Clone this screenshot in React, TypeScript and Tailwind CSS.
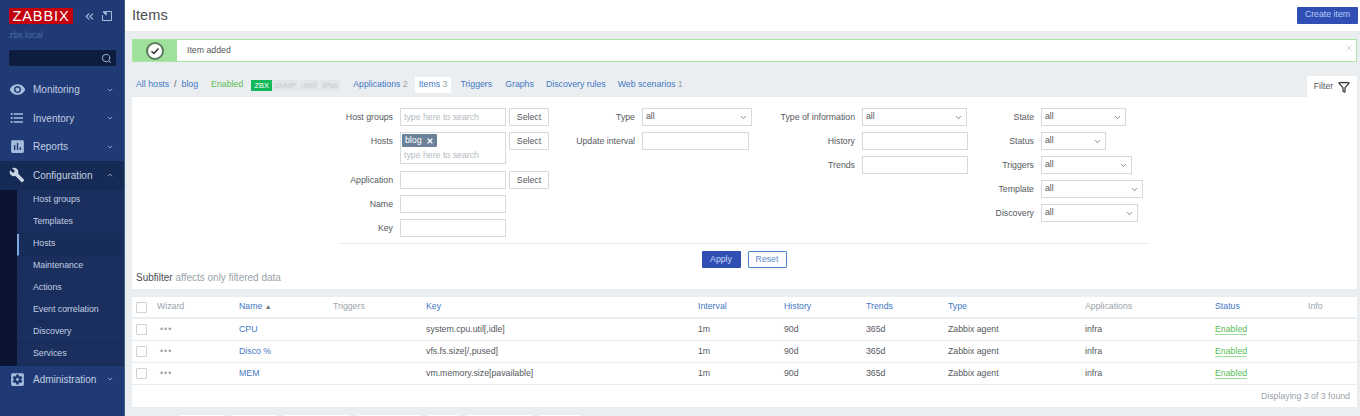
import type { ReactNode } from "react";
import { ChevronDown, ChevronUp, ChevronsLeft, Funnel, Search, X } from "lucide-react";
import {
  MdAssessment,
  MdBuild,
  MdFormatListBulleted,
  MdRemoveRedEye,
  MdSettingsApplications,
} from "react-icons/md";

const subMenu = [
  "Host groups",
  "Templates",
  "Hosts",
  "Maintenance",
  "Actions",
  "Event correlation",
  "Discovery",
  "Services",
];

const rows = [
  { name: "CPU", key: "system.cpu.util[,idle]" },
  { name: "Disco %", key: "vfs.fs.size[/,pused]" },
  { name: "MEM", key: "vm.memory.size[pavailable]" },
];

const footerTabs = ["w-[44px]", "w-[45px]", "w-[65px]", "w-[63px]", "w-[29px]", "w-[65px]", "w-[42px]"];

const gridCols =
  "grid grid-cols-[21px_82px_94px_93px_272px_86px_82px_82px_137px_130px_93px_1fr] pl-[4px] items-center";

function MenuItem({ icon, label, open, active }: { icon: ReactNode; label: string; open?: boolean; active?: boolean }) {
  return (
    <div className={`flex h-[28.5px] items-center pl-[9px] pr-[10px] text-[#c3cfe0] ${active ? "bg-[#152a54]" : ""}`}>
      <span className="flex w-[24px] items-center text-[#a6bcdc]">{icon}</span>
      <span className="flex-1 text-[10px]">{label}</span>
      {open ? <ChevronUp size={8} strokeWidth={2} /> : <ChevronDown size={8} strokeWidth={2} />}
    </div>
  );
}

function Field({ label, labelW, children, tall }: { label: string; labelW: string; children: ReactNode; tall?: boolean }) {
  return (
    <div className={`flex gap-[7px] ${tall ? "h-[39px]" : "h-[24px]"}`}>
      <span className={`${labelW} shrink-0 pt-[3px] text-right leading-[12px] text-[#55595e]`}>{label}</span>
      <div className="flex gap-[3px]">{children}</div>
    </div>
  );
}

function TextBox({ w = "w-[107px]", placeholder }: { w?: string; placeholder?: string }) {
  return (
    <div className={`${w} h-[18px] border border-[#d3dae0] bg-white px-[3px] leading-[16px] text-[#b4bac0]`}>
      {placeholder}
    </div>
  );
}

function SelectBtn() {
  return (
    <div className="h-[18px] w-[40px] rounded-[1px] border border-[#d3dae0] bg-white text-center leading-[16px] text-[#55595e]">
      Select
    </div>
  );
}

function Dropdown({ w }: { w: string }) {
  return (
    <div className={`${w} flex h-[18px] items-center justify-between border border-[#d3dae0] bg-white pl-[3px] pr-[3px] text-[#55595e]`}>
      all
      <ChevronDown size={9} strokeWidth={2} className="text-[#5e6469]" />
    </div>
  );
}

function Head({ children, link }: { children?: ReactNode; link?: boolean }) {
  return <span className={link ? "text-[#3f77c4]" : "text-[#9aa3aa]"}>{children}</span>;
}

export default function App() {
  return (
    <div className="flex h-[416px] w-[1360px] overflow-hidden bg-[#ebeef0] font-['Liberation_Sans',sans-serif] text-[8.75px]">
      <aside className="w-[125px] shrink-0 border-r border-[#3d5f7c] bg-[#1f3a75]">
        <div className="flex items-center pl-[9px] pt-[8px]">
          <div className="flex h-[16px] w-[64px] items-center justify-center rounded-[1px] bg-[#c4000c] text-[14.5px] leading-none tracking-[0.9px] text-white">
            ZABBIX
          </div>
          <ChevronsLeft size={13} className="ml-[10px] text-[#a6bcdc]" />
          <svg viewBox="0 0 10 10" className="ml-[6px] h-[10px] w-[10px] text-[#a6bcdc]" fill="none" stroke="currentColor">
            <path d="M4 .5h5.5v9H.5V4" />
            <path d="M.8.8l3.4 3.4M.8.8h3.4v3.4" fill="currentColor" strokeWidth=".8" />
          </svg>
        </div>
        <div className="pl-[9px] pt-[6px] text-[8.75px] leading-[11px] text-[#4f6c9e]">zbx.local</div>
        <div className="ml-[9px] mt-[9px] flex h-[16px] w-[107px] items-center justify-end rounded-[1px] border border-[#11203f] bg-[#0e1d3f] pr-[3px] text-[#a6bcdc]">
          <Search size={11} />
        </div>
        <div className="mt-[9.5px]">
          <MenuItem icon={<MdRemoveRedEye size={17} />} label="Monitoring" />
          <MenuItem icon={<MdFormatListBulleted size={16} />} label="Inventory" />
          <MenuItem icon={<MdAssessment size={17} />} label="Reports" />
          <MenuItem icon={<MdBuild size={16} className="text-[#c9d5e6]" />} label="Configuration" open active />
        </div>
        <div className="flex bg-[#0a1430]">
          <div className="w-[17px]" />
          <div className="flex-1">
            {subMenu.map((s) => (
              <div
                key={s}
                className={`flex h-[22px] items-center border-b border-[#152a54] pl-[16px] text-[#c3cfe0] ${
                  s === "Hosts" ? "border-l-2 border-l-[#7ea8e0] bg-[#172c58] !pl-[14px]" : "bg-[#1b2f5f]"
                }`}
              >
                {s}
              </div>
            ))}
          </div>
        </div>
        <div className="-mt-[0.5px]">
          <MenuItem icon={<MdSettingsApplications size={17} />} label="Administration" />
        </div>
      </aside>

      <main className="min-w-0 flex-1">
        <header className="flex h-[31px] items-center justify-between bg-white pl-[7px] pr-[2px]">
          <h1 className="text-[14.6px] text-[#4a4e52]">Items</h1>
          <div className="mb-[1px] flex h-[17px] w-[61px] items-center justify-center rounded-[1px] bg-[#2f4fb5] text-[#b9cbf2]">
            Create item
          </div>
        </header>

        <div className="ml-[7px] mr-[3px] mt-[8px] flex h-[23px] border border-[#a8e6a3] bg-white">
          <div className="flex w-[44px] items-center justify-center bg-[#9fe09a]">
            <div className="flex h-[18px] w-[18px] items-center justify-center rounded-full border-2 border-[#5b7a5e] bg-white">
              <svg viewBox="0 0 10 10" className="h-[10px] w-[10px]" fill="none" stroke="#2b2f33" strokeWidth="1.5">
                <path d="M1.5 5.2l2.4 2.3 4.6-5" />
              </svg>
            </div>
          </div>
          <span className="flex-1 pl-[10px] leading-[21px] text-[#55595e]">Item added</span>
          <X size={8} className="mr-[3px] mt-[4px] text-[#b4bac0]" />
        </div>

        <nav className="ml-[7px] mr-[3px] mt-[14px] flex h-[21px] items-start">
          <div className="mt-[1px] flex h-[16px] flex-1 items-center pl-[4px] text-[#3f77c4]">
            <span>All hosts</span>
            <span className="mx-[5px] text-[#55595e]">/</span>
            <span>blog</span>
            <span className="ml-[13px] text-[#59bd56]">Enabled</span>
            <span className="ml-[8px] flex h-[11px] text-[7.5px] leading-[11px] text-[#c8cdd1]">
              <span className="w-[21px] bg-[#12b85a] text-center text-white">ZBX</span>
              <span className="w-[26px] bg-[#e2e6e9] text-center">SNMP</span>
              <span className="ml-[1px] w-[20px] bg-[#e2e6e9] text-center">JMX</span>
              <span className="ml-[1px] w-[20px] bg-[#e2e6e9] text-center">IPMI</span>
            </span>
            <span className="ml-[13px]">Applications <span className="text-[#9aa3aa]">2</span></span>
            <span className="ml-[7px] flex h-[16px] items-center bg-white px-[4px]">
              Items&nbsp;<span className="text-[#9aa3aa]">3</span>
            </span>
            <span className="ml-[9px]">Triggers</span>
            <span className="ml-[13px]">Graphs</span>
            <span className="ml-[12px]">Discovery rules</span>
            <span className="ml-[12px]">Web scenarios <span className="text-[#9aa3aa]">1</span></span>
          </div>
          <div className="flex h-[21px] w-[50px] items-center justify-center gap-[5px] bg-white text-[#55595e]">
            Filter
            <Funnel size={12} strokeWidth={2.5} className="text-[#33373b]" />
          </div>
        </nav>

        <section className="ml-[7px] mr-[3px] h-[192px] bg-white">
          <div className="flex pl-[206px] pt-[11px]">
            <div className="w-[211px]">
              <Field label="Host groups" labelW="w-[55px]">
                <TextBox w="w-[106px]" placeholder="type here to search" />
                <SelectBtn />
              </Field>
              <Field label="Hosts" labelW="w-[55px]" tall>
                <div className="h-[32px] w-[106px] border border-[#d3dae0] px-[1px] pt-[1px]">
                  <span className="flex h-[13px] w-[35px] items-center justify-between rounded-[1px] bg-[#6b8299] px-[3px] text-white">
                    blog
                    <X size={8} strokeWidth={3.5} />
                  </span>
                  <div className="mt-[1px] pl-[2px] leading-[14px] text-[#b4bac0]">type here to search</div>
                </div>
                <SelectBtn />
              </Field>
              <Field label="Application" labelW="w-[55px]">
                <TextBox w="w-[106px]" />
                <SelectBtn />
              </Field>
              <Field label="Name" labelW="w-[55px]">
                <TextBox w="w-[106px]" />
              </Field>
              <Field label="Key" labelW="w-[55px]">
                <TextBox w="w-[106px]" />
              </Field>
            </div>
            <div className="w-[203px]">
              <Field label="Type" labelW="w-[86px]">
                <Dropdown w="w-[110px]" />
              </Field>
              <Field label="Update interval" labelW="w-[86px]">
                <TextBox />
              </Field>
            </div>
            <div className="w-[215px]">
              <Field label="Type of information" labelW="w-[103px]">
                <Dropdown w="w-[105px]" />
              </Field>
              <Field label="History" labelW="w-[103px]">
                <TextBox w="w-[106px]" />
              </Field>
              <Field label="Trends" labelW="w-[103px]">
                <TextBox w="w-[106px]" />
              </Field>
            </div>
            <div>
              <Field label="State" labelW="w-[67px]">
                <Dropdown w="w-[85px]" />
              </Field>
              <Field label="Status" labelW="w-[67px]">
                <Dropdown w="w-[65px]" />
              </Field>
              <Field label="Triggers" labelW="w-[67px]">
                <Dropdown w="w-[91px]" />
              </Field>
              <Field label="Template" labelW="w-[67px]">
                <Dropdown w="w-[102px]" />
              </Field>
              <Field label="Discovery" labelW="w-[67px]">
                <Dropdown w="w-[97px]" />
              </Field>
            </div>
          </div>
          <div className="ml-[206px] mr-[207px] flex justify-center gap-[7px] border-t border-[#ebeef0] pt-[7px]">
            <div className="h-[17px] w-[39px] rounded-[1px] bg-[#2f4fb5] text-center leading-[17px] text-[#c9d8f5]">Apply</div>
            <div className="h-[17px] w-[39px] rounded-[1px] border border-[#4f83c9] text-center leading-[15px] text-[#5a8acb]">Reset</div>
          </div>
          <div className="mt-[4px] pl-[4px] text-[10px] leading-[12px] text-[#9aa3aa]">
            <span className="text-[#4a4e52]">Subfilter</span> affects only filtered data
          </div>
        </section>

        <section className="ml-[7px] mr-[3px] mt-[8px] h-[110px] bg-white">
          <div className={`${gridCols} h-[22px] border-b-2 border-[#ebeef0]`}>
            <span className="h-[11px] w-[11px] rounded-[1px] border border-[#cdd3d8]" />
            <Head>Wizard</Head>
            <span className="text-[#3f77c4]">
              Name <span className="text-[7px] text-[#6b7176]">▲</span>
            </span>
            <Head>Triggers</Head>
            <Head link>Key</Head>
            <Head link>Interval</Head>
            <Head link>History</Head>
            <Head link>Trends</Head>
            <Head link>Type</Head>
            <Head>Applications</Head>
            <Head link>Status</Head>
            <Head>Info</Head>
          </div>
          {rows.map((r) => (
            <div key={r.name} className={`${gridCols} h-[22px] border-b border-[#ebeef0] text-[#55595e]`}>
              <span className="h-[11px] w-[11px] rounded-[1px] border border-[#cdd3d8]" />
              <span className="pl-[3px] tracking-[1px] text-[#9aa3aa]">•••</span>
              <span className="text-[#3f77c4]">{r.name}</span>
              <span />
              <span>{r.key}</span>
              <span>1m</span>
              <span>90d</span>
              <span>365d</span>
              <span>Zabbix agent</span>
              <span>infra</span>
              <span className="w-fit border-b border-[#9fe09a] leading-[10px] text-[#59bd56]">Enabled</span>
              <span />
            </div>
          ))}
          <div className="pr-[7px] pt-[5px] text-right text-[#9aa3aa]">Displaying 3 of 3 found</div>
        </section>

        <div className="ml-[55px] mt-[8px] flex gap-[8px]">
          {footerTabs.map((w) => (
            <span key={w} className={`${w} h-[2px] bg-white`} />
          ))}
        </div>
      </main>
    </div>
  );
}
